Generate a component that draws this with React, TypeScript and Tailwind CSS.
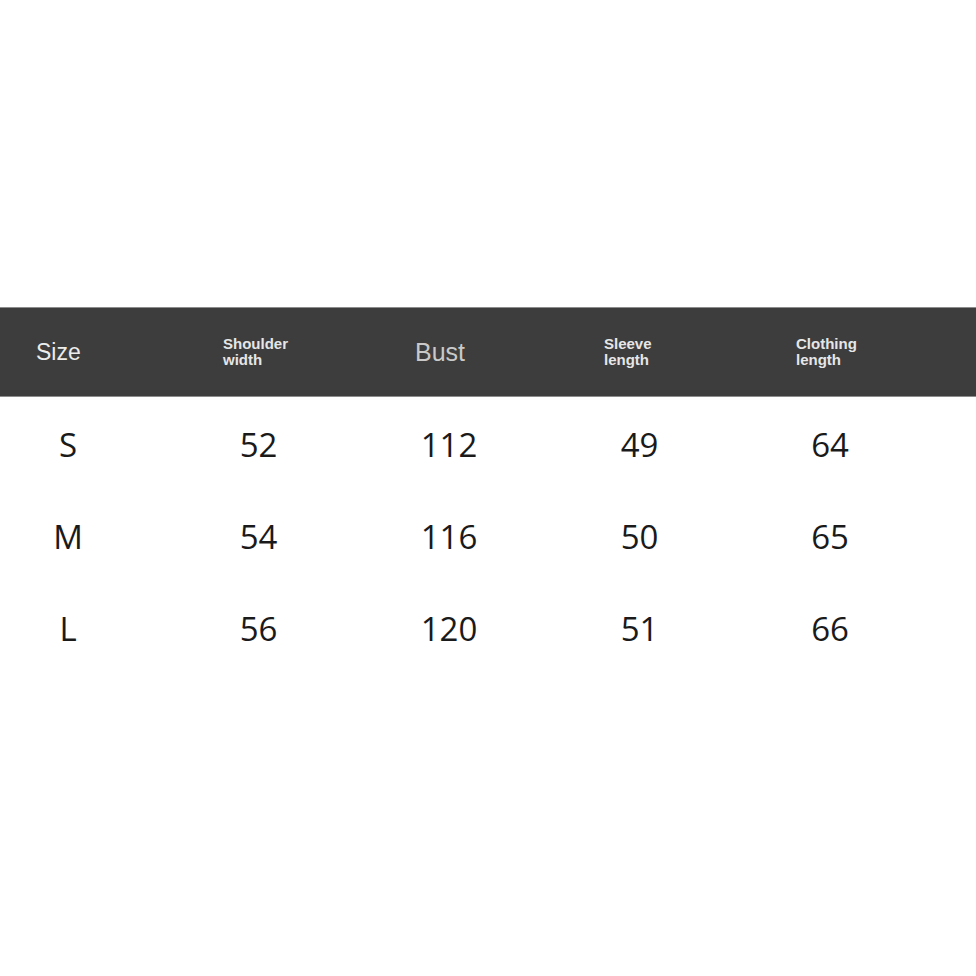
const rows = [
  ['S', '52', '112', '49', '64'],
  ['M', '54', '116', '50', '65'],
  ['L', '56', '120', '51', '66'],
]

export default function App() {
  return (
    <div className="min-h-screen w-[976px] bg-white pt-[307px]">
      <div
        className="grid h-[90px] grid-cols-[187px_192px_189px_192px_1fr] items-center border-y border-[#8c8c8c] bg-[#3d3d3d] pl-[36px]"
        style={{ fontFamily: '"Liberation Sans", Arial, sans-serif' }}
      >
        <span className="text-[23px] leading-none text-[#ececec]">Size</span>
        <span className="text-[15px] font-bold leading-[16px] text-[#e6e6e6]">
          Shoulder
          <br />
          width
        </span>
        <span className="text-[25px] leading-none text-[#c9c9c9]">Bust</span>
        <span className="text-[15px] font-bold leading-[16px] text-[#e6e6e6]">
          Sleeve
          <br />
          length
        </span>
        <span className="text-[15px] font-bold leading-[16px] text-[#e6e6e6]">
          Clothing
          <br />
          length
        </span>
      </div>
      <div className="mt-[1px]" style={{ fontFamily: '"Open Sans", "Noto Sans", sans-serif' }}>
        {rows.map(r => (
          <div key={r[0]} className="flex h-[92px] items-center gap-[90.5px] pl-[18px]">
            {r.map((v, i) => (
              <span key={i} className="w-[100px] text-center text-[33px] leading-none text-[#1a1a1a]">
                {v}
              </span>
            ))}
          </div>
        ))}
      </div>
    </div>
  )
}
